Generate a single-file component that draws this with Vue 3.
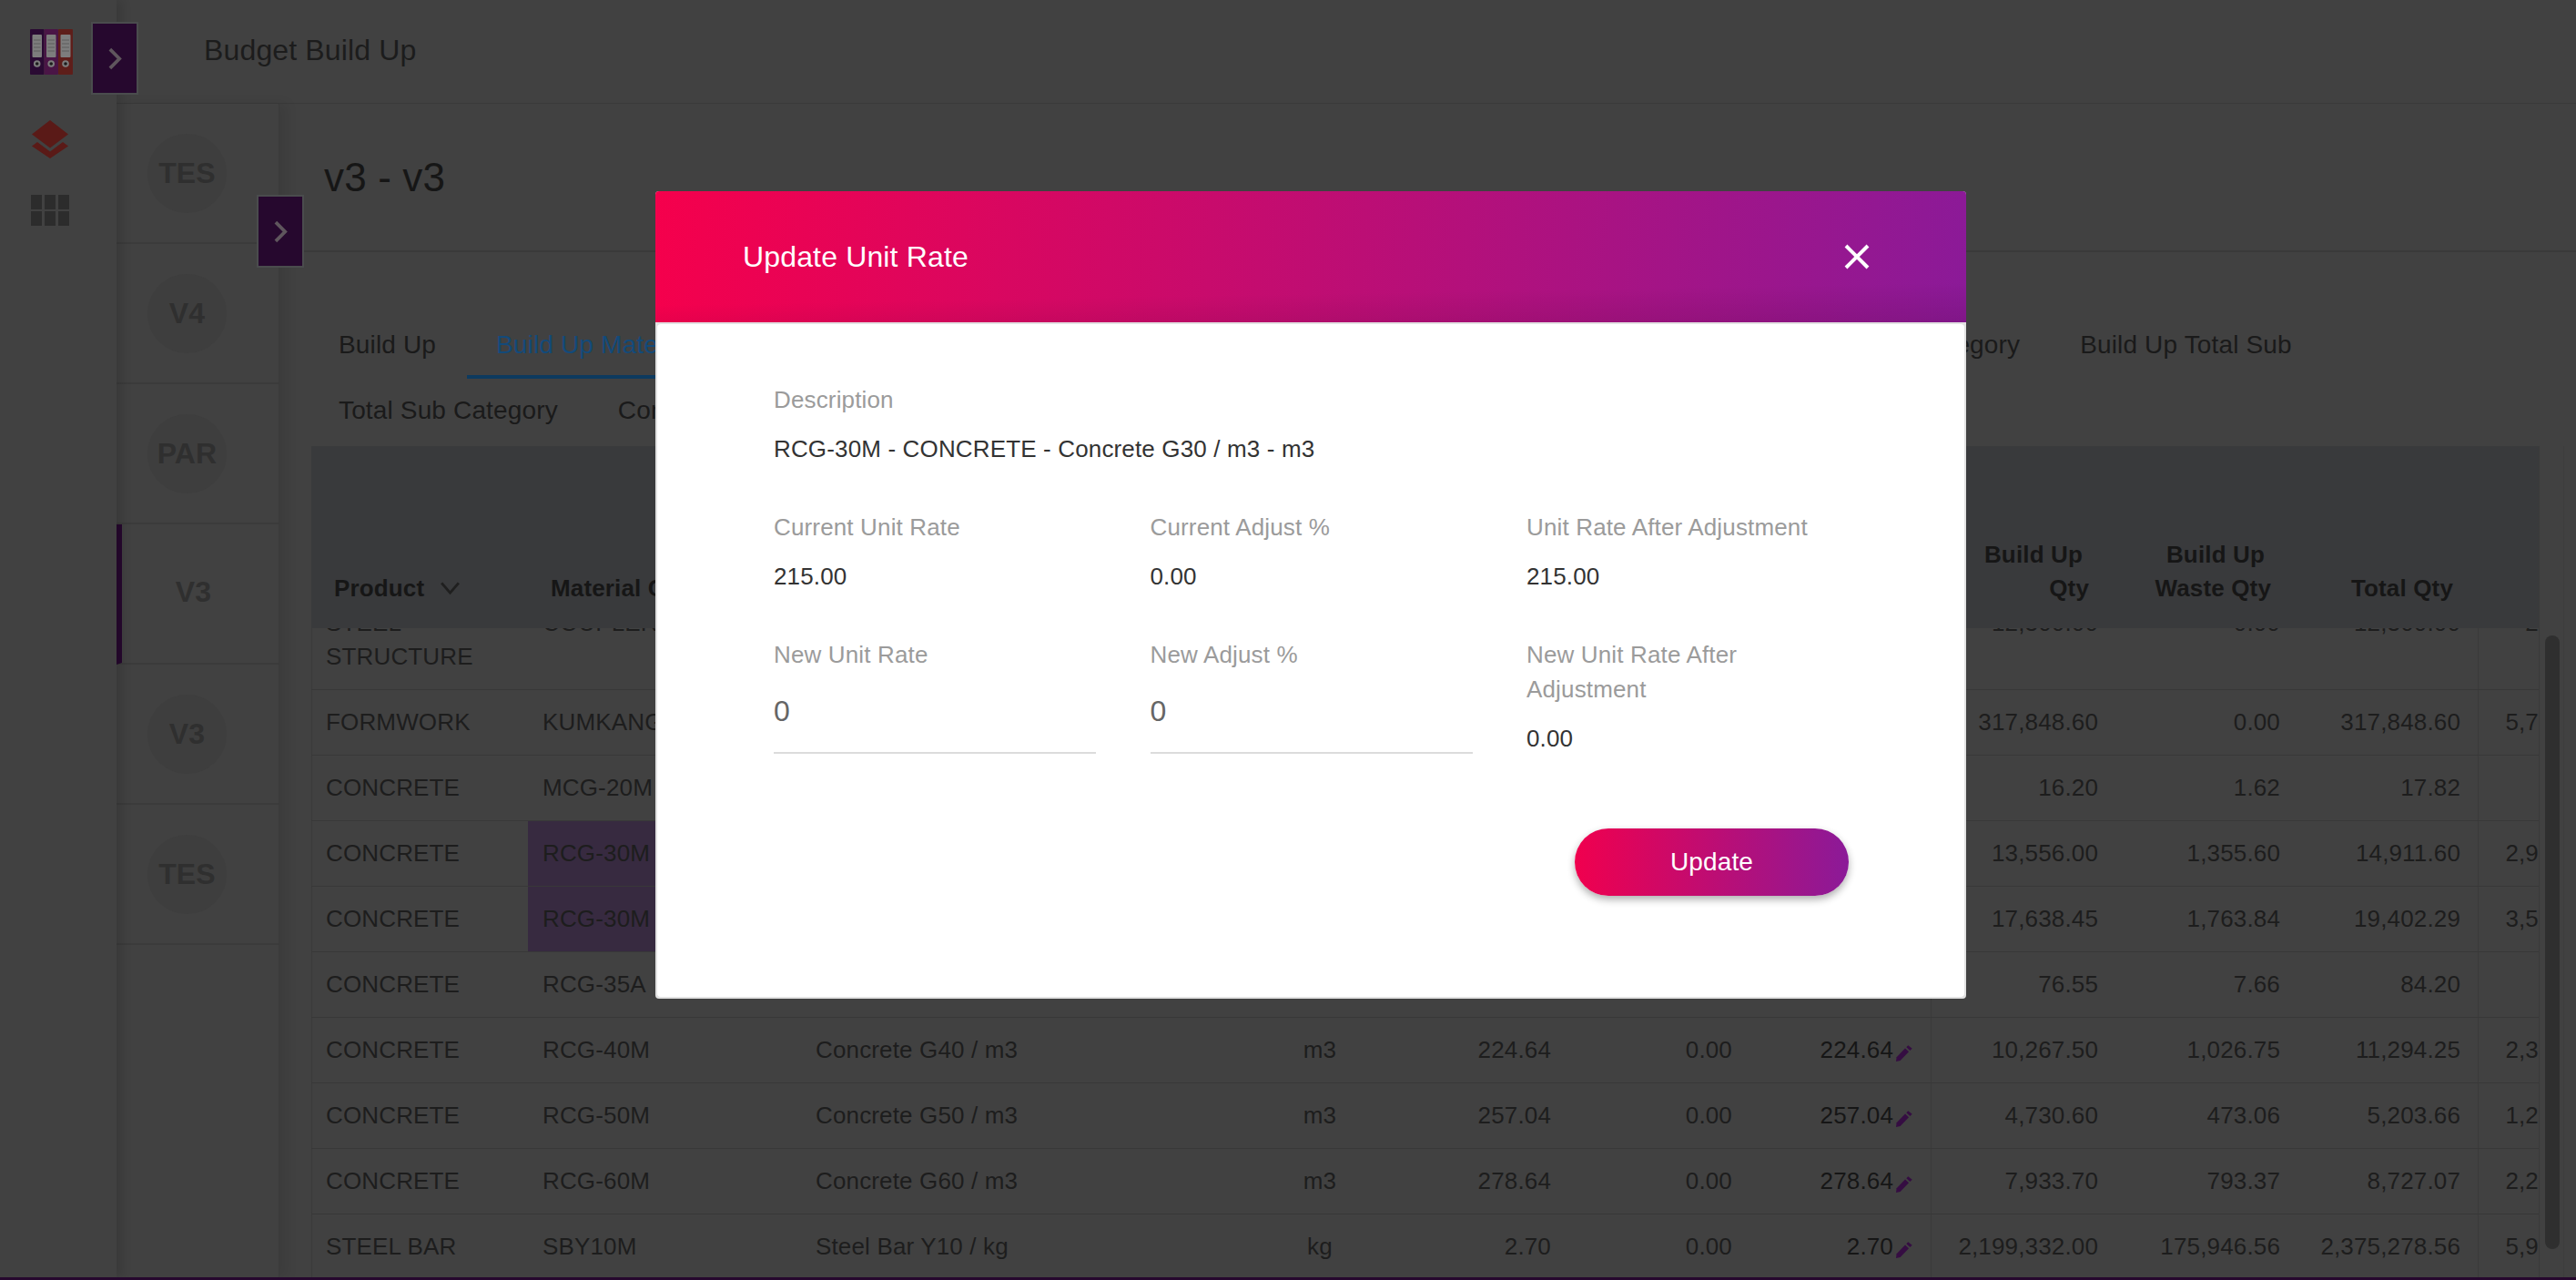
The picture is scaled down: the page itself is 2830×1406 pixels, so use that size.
<script setup>
const topTabs = [
  { label: 'Build Up' },
  { label: 'Build Up Material', active: true },
  { label: 'Build Up Labour' },
  { label: 'Build Up Plant' },
  { label: 'Build Up Equipment', fit: true },
  { label: 'Build Up Sub Category' },
  { label: 'Build Up Category' },
  { label: 'Build Up Total Sub' },
  { label: 'Total Sub Category' },
  { label: 'Contingency' },
]
const versions = [
  { code: 'TES' },
  { code: 'V4' },
  { code: 'PAR' },
  { code: 'V3', active: true },
  { code: 'V3' },
  { code: 'TES' },
]
const rows = [
  ['STEEL STRUCTURE', 'COUPLER', 'Coupler / nos', 'nos', '21.00', '0.00', '21.00', '12,300.00', '0.00', '12,300.00', '258,300.00'],
  ['FORMWORK', 'KUMKANG', 'Kumkang Formwork / m2', 'm2', '18.00', '0.00', '18.00', '317,848.60', '0.00', '317,848.60', '5,721,274.80'],
  ['CONCRETE', 'MCG-20M', 'Concrete G20 / m3', 'm3', '198.00', '0.00', '198.00', '16.20', '1.62', '17.82', '3,207.60'],
  ['CONCRETE', 'RCG-30M', 'Concrete G30 / m3', 'm3', '215.00', '0.00', '215.00', '13,556.00', '1,355.60', '14,911.60', '2,914,540.00', true],
  ['CONCRETE', 'RCG-30M', 'Concrete G30 / m3', 'm3', '200.00', '0.00', '200.00', '17,638.45', '1,763.84', '19,402.29', '3,527,690.00', true],
  ['CONCRETE', 'RCG-35A', 'Concrete G35 / m3', 'm3', '222.00', '0.00', '222.00', '76.55', '7.66', '84.20', '16,994.10'],
  ['CONCRETE', 'RCG-40M', 'Concrete G40 / m3', 'm3', '224.64', '0.00', '224.64', '10,267.50', '1,026.75', '11,294.25', '2,306,491.20'],
  ['CONCRETE', 'RCG-50M', 'Concrete G50 / m3', 'm3', '257.04', '0.00', '257.04', '4,730.60', '473.06', '5,203.66', '1,215,953.42'],
  ['CONCRETE', 'RCG-60M', 'Concrete G60 / m3', 'm3', '278.64', '0.00', '278.64', '7,933.70', '793.37', '8,727.07', '2,210,666.17'],
  ['STEEL BAR', 'SBY10M', 'Steel Bar Y10 / kg', 'kg', '2.70', '0.00', '2.70', '2,199,332.00', '175,946.56', '2,375,278.56', '5,938,196.40'],
]
</script>

<template>
  <div class="app">
    <aside class="rail">
      <svg class="books" viewBox="0 0 47 50" aria-hidden="true">
        <rect x="0" y="0" width="15.5" height="50" rx="1" fill="#2a0a33" />
        <rect x="15.5" y="0" width="15.5" height="50" rx="1" fill="#4a1546" />
        <rect x="31" y="0" width="16" height="50" rx="1" fill="#5e1e1a" />
        <g fill="#7d7d7d">
          <rect x="2.5" y="6" width="10.5" height="25" rx="1" />
          <rect x="18" y="6" width="10.5" height="25" rx="1" />
          <rect x="33.5" y="6" width="11" height="25" rx="1" />
          <circle cx="7.7" cy="38" r="3.8" />
          <circle cx="23.2" cy="38" r="3.8" />
          <circle cx="39" cy="38" r="3.8" />
        </g>
        <g fill="#1c1c1c">
          <circle cx="7.7" cy="38" r="1.8" />
          <circle cx="23.2" cy="38" r="1.8" />
          <circle cx="39" cy="38" r="1.8" />
        </g>
        <g stroke="#5e5e5e" stroke-width="1">
          <path d="M4 12h7.5M4 16h7.5M4 20h7.5M4 24h7.5M19.500 12H27M19.500 16H27M19.500 20H27M19.500 24H27M35 12h8M35 16h8M35 20h8M35 24h8" />
        </g>
      </svg>
      <svg class="layers" viewBox="0 0 40 42" aria-hidden="true">
        <path d="M20 0 40 15.500 20 30.500 0 15.500Z" fill="#5a1a17" />
        <path d="M6 24 20 34.500 34 24 40 28.500 20 42 0 28.500Z" fill="#5a1a17" />
      </svg>
      <div class="apps">
        <span v-for="n in 6" :key="n" class="app-cell"></span>
      </div>
    </aside>

    <button class="toggle toggle-rail" type="button" aria-label="Expand menu">
      <svg viewBox="0 0 16 26" aria-hidden="true"><path d="M2 2 13 13 2 24" /></svg>
    </button>

    <div class="main">
      <header class="topbar">Budget Build Up</header>

      <div class="workspace">
        <nav class="versions">
          <div v-for="(v, i) in versions" :key="i" class="version" :class="{ active: v.active }">
            <span class="badge">{{ v.code }}</span>
          </div>
        </nav>

        <section class="content">
          <div class="title-block"><h1>v3 - v3</h1></div>

          <div class="tabs">
            <div v-for="t in topTabs" :key="t.label" class="tab" :class="{ active: t.active, fit: t.fit }">{{ t.label }}</div>
          </div>

          <div class="table-wrap">
            <div class="table">
              <div class="head grid">
                <div class="th">Product
                  <svg class="sort" viewBox="0 0 22 16" aria-hidden="true"><path d="M1 1.500 11 13 21 1.500" /></svg>
                </div>
                <div class="th">Material Code</div>
                <div class="th">Description</div>
                <div class="th center">UOM</div>
                <div class="th right">Unit Rate</div>
                <div class="th right">Adjust %</div>
                <div class="th right">Unit Rate After Adjustment</div>
                <div class="th right"><span class="first-line">Build Up</span><br />Qty</div>
                <div class="th right"><span class="first-line">Build Up</span><br />Waste Qty</div>
                <div class="th right total">Total Qty</div>
              </div>
              <div class="body">
                <div class="rows">
                  <div v-for="(r, i) in rows" :key="i" class="row grid">
                    <div class="td">{{ r[0] }}</div>
                    <div class="td" :class="{ picked: r[11] }">{{ r[1] }}</div>
                    <div class="td">{{ r[2] }}</div>
                    <div class="td center">{{ r[3] }}</div>
                    <div class="td right">{{ r[4] }}</div>
                    <div class="td right">{{ r[5] }}</div>
                    <div class="td right rate">
                      {{ r[6] }}
                      <svg class="pencil" viewBox="0 0 18 18" aria-hidden="true">
                        <path d="M0 18 .6 13.300 10 3.600 14 7.300 4.600 17Z" />
                        <path d="M11.300 2.300 13.300.3 17.700 3.700 15.400 6Z" />
                      </svg>
                    </div>
                    <div class="td right ruled">{{ r[7] }}</div>
                    <div class="td right">{{ r[8] }}</div>
                    <div class="td right total">{{ r[9] }}</div>
                    <div class="td right ruled last">{{ r[10] }}</div>
                  </div>
                </div>
              </div>
            </div>
            <div class="gutter"><span class="thumb"></span></div>
          </div>
        </section>
      </div>
    </div>

    <button class="toggle toggle-panel" type="button" aria-label="Expand versions">
      <svg viewBox="0 0 16 26" aria-hidden="true"><path d="M2 2 13 13 2 24" /></svg>
    </button>

    <div class="modal" role="dialog" aria-label="Update Unit Rate">
      <div class="modal-head">
        <span class="modal-title">Update Unit Rate</span>
        <svg class="close" viewBox="0 0 28 28" aria-hidden="true"><path d="M2 2 26 26M26 2 2 26" /></svg>
      </div>
      <div class="modal-body">
        <div class="field">
          <div class="label">Description</div>
          <div class="value">RCG-30M - CONCRETE - Concrete G30 / m3 - m3</div>
        </div>
        <div class="form-grid">
          <div class="field">
            <div class="label">Current Unit Rate</div>
            <div class="value">215.00</div>
          </div>
          <div class="field">
            <div class="label">Current Adjust %</div>
            <div class="value">0.00</div>
          </div>
          <div class="field">
            <div class="label">Unit Rate After Adjustment</div>
            <div class="value">215.00</div>
          </div>
          <div class="field">
            <div class="label">New Unit Rate</div>
            <input class="input" value="0" aria-label="New Unit Rate" />
          </div>
          <div class="field">
            <div class="label">New Adjust %</div>
            <input class="input" value="0" aria-label="New Adjust %" />
          </div>
          <div class="field">
            <div class="label">New Unit Rate After<br />Adjustment</div>
            <div class="value">0.00</div>
          </div>
        </div>
        <div class="actions">
          <button class="update" type="button">Update</button>
        </div>
      </div>
    </div>
  </div>
</template>

<style>
html, body { margin: 0; padding: 0; overflow: hidden; background: #414141; }
</style>

<style scoped>
.app {
  position: relative;
  display: flex;
  width: 2830px;
  height: 1406px;
  box-sizing: border-box;
  overflow: hidden;
  background: #414141;
  border-bottom: 3px solid #26082e;
  font-family: "Liberation Sans", Arial, sans-serif;
  letter-spacing: .15px;
  color: #1d1d1d;
}
.rail {
  position: relative;
  z-index: 2;
  flex: 0 0 128px;
  box-shadow: 6px 0 10px rgba(0, 0, 0, .12);
  background: #414141;
}
.books { position: absolute; left: 33px; top: 32px; width: 47px; height: 50px; }
.layers { position: absolute; left: 35px; top: 132px; width: 40px; height: 42px; }
.apps {
  position: absolute;
  left: 34px;
  top: 214px;
  display: grid;
  grid-template-columns: repeat(3, 12px);
  grid-template-rows: repeat(2, 16px);
  gap: 2px 3px;
}
.app-cell { background: #2c2c2c; }

.toggle {
  position: absolute;
  z-index: 3;
  width: 52px;
  height: 80px;
  padding: 0;
  display: flex;
  align-items: center;
  justify-content: center;
  box-sizing: border-box;
  border: 2px solid #4a4c4d;
  background: #26082e;
}
.toggle svg { width: 15px; height: 25px; fill: none; stroke: #5f565d; stroke-width: 4; }
.toggle-rail { left: 100px; top: 24px; }
.toggle-panel { left: 282px; top: 214px; }

.main { flex: 1; display: flex; flex-direction: column; min-width: 0; }
.topbar {
  flex: 0 0 114px;
  box-sizing: border-box;
  height: 114px;
  padding: 36px 0 0 96px;
  border-bottom: 1px solid #3a3a3a;
  font-size: 32px;
  line-height: 38px;
  color: #1c1c1c;
}
.workspace { flex: 1; display: flex; min-height: 0; }
.versions {
  position: relative;
  z-index: 1;
  flex: 0 0 179px;
  box-sizing: border-box;
  border-right: 1px solid #3a3a3a;
  box-shadow: 8px 0 12px rgba(0, 0, 0, .08);
}
.version {
  box-sizing: border-box;
  height: 154px;
  padding-left: 34px;
  display: flex;
  align-items: center;
  border-bottom: 2px solid #3b3b3b;
}
.version.active {
  padding-left: 35px;
  padding-bottom: 3px;
  border-left: 6px solid #26082e;
}
.badge {
  width: 87px;
  height: 87px;
  border-radius: 50%;
  background: #3e3e3e;
  display: flex;
  align-items: center;
  justify-content: center;
  font-size: 32px;
  font-weight: 700;
  color: #2f2f2f;
}
.version.active .badge { background: transparent; }

.content { flex: 1; min-width: 0; display: flex; flex-direction: column; }
.title-block {
  flex: 0 0 163px;
  box-sizing: border-box;
  border-bottom: 2px solid #3a3a3a;
  padding-left: 49px;
  display: flex;
  align-items: center;
}
.title-block h1 {
  margin: 0;
  font-size: 44px;
  font-weight: 400;
  color: #161616;
}
.tabs {
  margin: 65px 0 4px 33px;
  width: 2450px;
  height: 144px;
  display: flex;
  flex-wrap: wrap;
  column-gap: 2px;
  align-content: flex-start;
}
.tab {
  box-sizing: border-box;
  height: 72px;
  padding: 1px 32px 0;
  display: flex;
  align-items: center;
  white-space: nowrap;
  font-size: 28px;
  color: #1a1a1a;
}
.tab.fit { width: 292px; }
.tab.active { color: #134a7a; box-shadow: 0 2px 0 #0d3a5f, inset 0 -2px 0 #0d3a5f; }

.table-wrap { flex: 1; min-height: 0; display: flex; margin-left: 35px; }
.table {
  flex: 0 0 2447px;
  min-width: 0;
  display: flex;
  flex-direction: column;
  overflow: hidden;
  box-shadow: inset 1px 0 0 #3a3a3a;
}
.grid {
  display: grid;
  grid-template-columns: 238px 300px 500px 140px 200px 199px 202px 200px 200px 201px 200px;
}
.head {
  flex: 0 0 200px;
  height: 200px;
  background: #393a3c;
  align-items: end;
}
.th {
  padding: 0 26px 25px 25px;
  font-size: 26px;
  line-height: 37px;
  font-weight: 700;
  color: #161616;
  display: block;
  position: relative;
}
.th.right { text-align: right; }
.th.center { text-align: center; }
.th.total { padding-right: 27px; }
.first-line { padding-right: 7px; }
.sort {
  display: inline-block;
  width: 21px;
  height: 15px;
  margin-left: 10px;
  vertical-align: 1px;
  fill: none;
  stroke: #1f1f1f;
  stroke-width: 3;
}
.body { flex: 1; min-height: 0; overflow: hidden; }
.rows { margin-top: -41px; width: 2580px; }
.row { border-bottom: 1px solid #383838; box-sizing: border-box; }
.td {
  padding: 17px 16px;
  font-size: 26px;
  line-height: 37px;
  color: #1d1d1d;
  box-sizing: border-box;
  position: relative;
}
.td.right { text-align: right; }
.td.center { text-align: center; }
.td.total { padding-right: 19px; }
.td.picked { background: #372a40; }
.td.rate { padding-right: 41px; color: #161616; }
.td.ruled { border-left: 1px solid #3a3a3a; }
.td.last { white-space: nowrap; }
.pencil { position: absolute; right: 20px; top: 30px; width: 18px; height: 18px; fill: #350d42; }

.gutter {
  position: relative;
  flex: 0 0 28px;
  border-left: 1px solid #3a3a3a;
  border-right: 1px solid #3d3d3d;
  box-sizing: border-box;
}
.thumb {
  position: absolute;
  left: 6px;
  top: 208px;
  width: 16px;
  height: 674px;
  border-radius: 8px;
  background: #2f2f2f;
}

.modal {
  position: absolute;
  z-index: 6;
  left: 720px;
  top: 210px;
  width: 1440px;
  box-sizing: border-box;
  padding: 0 2px 2px;
  border-radius: 4px;
  background: #e2e2e2;
}
.modal-head {
  height: 144px;
  margin: 0 -2px 2px;
  box-sizing: border-box;
  padding: 0 106px 0 96px;
  display: flex;
  align-items: center;
  justify-content: space-between;
  border-radius: 4px 4px 0 0;
  background:
    linear-gradient(179deg, rgba(70, 0, 50, 0) 74%, rgba(70, 0, 50, .16) 100%),
    linear-gradient(95deg, #f5004c 0%, #8b1a98 100%);
}
.modal-title { font-size: 32px; color: #fff; }
.close { width: 28px; height: 28px; fill: none; stroke: #fff; stroke-width: 4; }
.modal-body {
  box-sizing: border-box;
  padding: 64px 127px 111px 128px;
  background: #fff;
  border-radius: 4px;
}
.form-grid {
  margin-top: 48px;
  display: grid;
  grid-template-columns: repeat(3, 354px);
  column-gap: 59.500px;
  row-gap: 48px;
}
.label { font-size: 26px; line-height: 38px; color: #9b9b9b; }
.value { margin-top: 16px; font-size: 26px; line-height: 38px; color: #333; }
.input {
  display: block;
  width: 100%;
  height: 76px;
  margin-top: 14px;
  box-sizing: border-box;
  padding: 0 0 16px;
  border: 0;
  border-bottom: 2px solid #dcdcdc;
  outline: 0;
  background: transparent;
  font-family: inherit;
  font-size: 32px;
  color: #666;
}
.actions { margin-top: 80px; display: flex; justify-content: flex-end; }
.update {
  width: 301px;
  height: 74px;
  padding: 0;
  border: 0;
  border-radius: 37px;
  background: linear-gradient(90deg, #f0004e 0%, #8b1a98 100%);
  box-shadow: 0 4px 8px rgba(0, 0, 0, .32);
  font-family: inherit;
  font-size: 28px;
  letter-spacing: inherit;
  color: #fff;
}
</style>
